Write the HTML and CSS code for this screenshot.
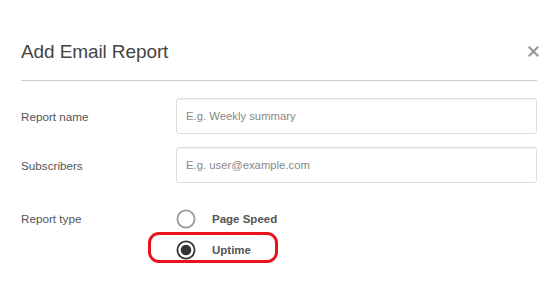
FILE: index.html
```html
<!DOCTYPE html>
<html>
<head>
<meta charset="utf-8">
<link rel="stylesheet" href="styles.css">
</head>
<body>
<div class="modal">
  <div class="modal-header">
    <h1 class="title">Add Email Report</h1>
    <button class="close" aria-label="Close">
      <svg width="11" height="11" viewBox="0 0 11 11"><path d="M1.5 1.5 L9.5 9.5 M9.5 1.5 L1.5 9.5" stroke="#999" stroke-width="2.2" stroke-linecap="square"/></svg>
    </button>
  </div>
  <form class="form">
    <div class="row">
      <label class="label">Report name</label>
      <input class="input" type="text" placeholder="E.g. Weekly summary">
    </div>
    <div class="row">
      <label class="label">Subscribers</label>
      <input class="input" type="text" placeholder="E.g. user@example.com">
    </div>
    <div class="row row-type">
      <label class="label">Report type</label>
      <div class="options">
        <div class="option">
          <svg class="radio" width="20" height="20" viewBox="0 0 20 20"><circle cx="10" cy="10" r="8.6" fill="#fff" stroke="#999" stroke-width="1.8"/></svg>
          <span class="opt-text">Page Speed</span>
        </div>
        <div class="option selected">
          <svg class="radio" width="20" height="20" viewBox="0 0 20 20"><circle cx="10" cy="10" r="8.6" fill="#fff" stroke="#333" stroke-width="1.8"/><circle cx="10" cy="10" r="5.3" fill="#333"/></svg>
          <span class="opt-text">Uptime</span>
          <span class="highlight"></span>
        </div>
      </div>
    </div>
  </form>
</div>
</body>
</html>
```
FILE: styles.css
```css
html, body {
  margin: 0;
  padding: 0;
  background: #fff;
}
body {
  font-family: "Liberation Sans", Arial, sans-serif;
  color: #555;
}
.modal {
  width: 560px;
  height: 282px;
  box-sizing: border-box;
  padding: 0 23px 0 21px;
}
.modal-header {
  display: flex;
  align-items: center;
  justify-content: space-between;
  height: 81px;
  border-bottom: 1px solid #ccc;
  box-sizing: border-box;
  padding-top: 22px;
}
.title {
  margin: 0;
  font-size: 19px;
  font-weight: normal;
  color: #444;
  line-height: 1;
  letter-spacing: -0.1px;
}
.close {
  border: 0;
  background: none;
  padding: 0;
  margin-right: -2px;
  width: 11px;
  height: 11px;
  display: flex;
}
.form {
  display: flex;
  flex-direction: column;
  gap: 13px;
  padding-top: 17px;
}
.row {
  display: grid;
  grid-template-columns: 155px 1fr;
  align-items: center;
}
.label {
  font-size: 11.7px;
  color: #555;
}
.input {
  height: 36px;
  box-sizing: border-box;
  border: 1px solid #ddd;
  border-radius: 3px;
  box-shadow: inset 0 1px 1px rgba(0,0,0,0.06);
  padding: 0 9px;
  font-family: "Liberation Sans", Arial, sans-serif;
  font-size: 11.3px;
  color: #555;
  outline: none;
}
.input::placeholder {
  color: #888;
}
.row-type {
  align-items: start;
  margin-top: 13px;
}
.row-type .label {
  line-height: 20px;
  margin-top: 0;
}
.options {
  display: flex;
  flex-direction: column;
  gap: 11px;
}
.option {
  position: relative;
  display: flex;
  align-items: center;
  height: 20px;
}
.radio {
  flex: none;
}
.opt-text {
  margin-left: 16px;
  font-size: 11.5px;
  font-weight: bold;
  color: #555;
}
.highlight {
  position: absolute;
  left: -28px;
  top: -8px;
  width: 130px;
  height: 31px;
  box-sizing: border-box;
  border: 3px solid #e8141c;
  border-radius: 11px;
}
```
